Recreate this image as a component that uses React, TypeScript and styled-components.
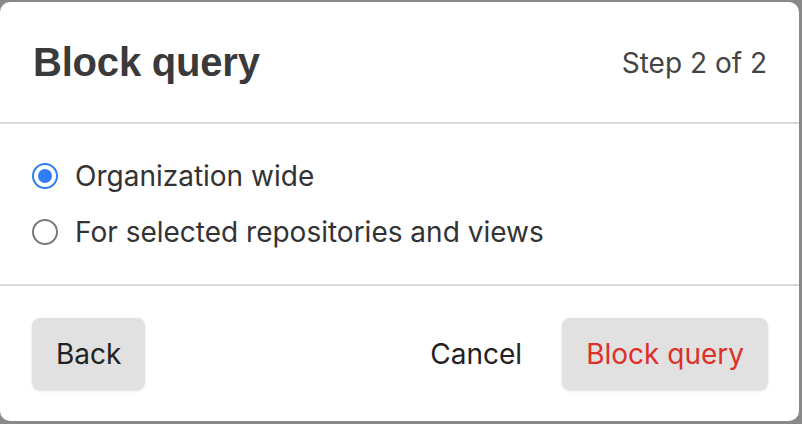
import React from "react";
import styled, { createGlobalStyle } from "styled-components";

const Global = createGlobalStyle`
  html, body { margin: 0; padding: 0; }
  body {
    background: #898989;
    width: 802px;
    height: 424px;
    overflow: hidden;
    font-family: Inter, "Noto Sans", sans-serif;
  }
`;

const Dialog = styled.div`
  margin-top: 2px;
  width: 799px;
  height: 419px;
  background: #ffffff;
  border-radius: 10px;
  display: flex;
  flex-direction: column;
  box-sizing: border-box;
  overflow: hidden;
`;

const Header = styled.div`
  height: 122px;
  padding: 0 32px 0 33px;
  display: flex;
  align-items: center;
  justify-content: space-between;
  border-bottom: 2px solid #d9d9d9;
  box-sizing: border-box;
`;

const Title = styled.h1`
  margin: 0;
  font-family: "Liberation Sans", Arial, sans-serif;
  font-weight: 700;
  font-size: 40px;
  color: #3a3a3a;
  letter-spacing: -0.2px;
`;

const Step = styled.span`
  font-size: 28px;
  color: #444444;
  margin-top: 2px;
`;

const Body = styled.div`
  height: 162px;
  padding: 24px 32px;
  display: flex;
  flex-direction: column;
  border-bottom: 2px solid #d9d9d9;
  box-sizing: border-box;
`;

const Option = styled.label`
  height: 56px;
  display: flex;
  align-items: center;
  gap: 17px;
  font-size: 28px;
  color: #333333;
  cursor: pointer;
`;

const Radio = styled.span<{ $checked?: boolean }>`
  width: 26px;
  height: 26px;
  border-radius: 50%;
  box-sizing: border-box;
  border: ${(p) => (p.$checked ? "2.5px solid #2f7cf6" : "2px solid #7a7a7a")};
  display: flex;
  align-items: center;
  justify-content: center;
  flex-shrink: 0;
  &::after {
    content: "";
    display: ${(p) => (p.$checked ? "block" : "none")};
    width: 14px;
    height: 14px;
    border-radius: 50%;
    background: #2f7cf6;
  }
`;

const Footer = styled.div`
  flex: 1;
  padding: 32px 31px 0 32px;
  display: flex;
  align-items: flex-start;
  gap: 16px;
`;

const Button = styled.button<{ $variant?: "plain" | "danger" | "default" }>`
  height: 72px;
  padding: 0 24px;
  border: none;
  border-radius: 8px;
  font-family: Inter, "Noto Sans", sans-serif;
  font-size: 28px;
  background: ${(p) => (p.$variant === "plain" ? "transparent" : "#e1e1e1")};
  box-shadow: ${(p) => (p.$variant === "plain" ? "none" : "0 1px 3px rgba(0,0,0,0.12)")};
  color: ${(p) => (p.$variant === "danger" ? "#dc3028" : "#222222")};
  cursor: pointer;
`;

const Spacer = styled.div`
  flex: 1;
`;

export default function App() {
  return (
    <>
      <Global />
      <Dialog>
        <Header>
          <Title>Block query</Title>
          <Step>Step 2 of 2</Step>
        </Header>
        <Body>
          <Option>
            <Radio $checked />
            Organization wide
          </Option>
          <Option>
            <Radio />
            For selected repositories and views
          </Option>
        </Body>
        <Footer>
          <Button $variant="default">Back</Button>
          <Spacer />
          <Button $variant="plain">Cancel</Button>
          <Button $variant="danger">Block query</Button>
        </Footer>
      </Dialog>
    </>
  );
}
